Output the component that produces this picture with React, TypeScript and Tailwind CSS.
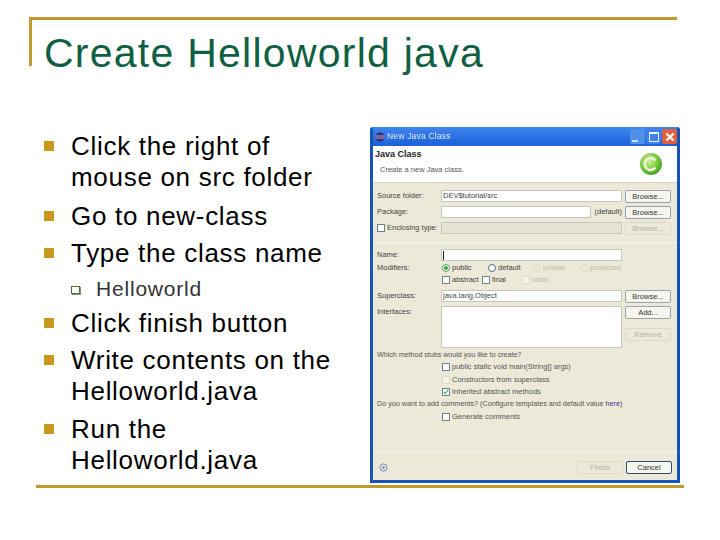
import React from "react";

const bullets: { text: string[]; sub?: boolean; mt: number }[] = [
  { text: ["Click the right of", "mouse on src folder"], mt: 0 },
  { text: ["Go to new-class"], mt: 8 },
  { text: ["Type the class name"], mt: 6 },
  { text: ["Helloworld"], sub: true, mt: 8 },
  { text: ["Click finish button"], mt: 7 },
  { text: ["Write contents on the", "Helloworld.java"], mt: 6 },
  { text: ["Run the", "Helloworld.java"], mt: 7 },
];

function Square() {
  return <span className="mt-[10px] mr-[17px] h-[10px] w-[10px] shrink-0 bg-[#c8991c]" />;
}

function Hollow() {
  return (
    <span className="mt-[9px] mr-[16px] ml-[27px] h-[8px] w-[9px] shrink-0 border border-[#4f6b3a] bg-white shadow-[1px_1px_0_#7d9468]" />
  );
}

function Btn({ label, disabled, strong }: { label: string; disabled?: boolean; strong?: boolean }) {
  return (
    <div
      className={`flex h-[13px] w-[46px] items-center justify-center rounded-[2px] border text-[7.5px] ${
        disabled
          ? "border-[#dcd9c8] text-[#b4b2a4]"
          : strong
            ? "border-[#2f4f6f] bg-[#f6f5ee] text-[#333]"
            : "border-[#9aa3ad] bg-[#f6f5ee] text-[#333]"
      }`}
    >
      {label}
    </div>
  );
}

function Field({ children, disabled, className = "" }: { children?: React.ReactNode; disabled?: boolean; className?: string }) {
  return (
    <div
      className={`flex items-center border border-[#c4c8bc] pl-[1px] text-[7.5px] text-[#444] ${
        disabled ? "bg-[#e6e3d3]" : "bg-white"
      } ${className}`}
    >
      {children}
    </div>
  );
}

function Row({ label, mt, children, right, h = 13 }: { label?: React.ReactNode; mt: string; children?: React.ReactNode; right?: React.ReactNode; h?: number }) {
  return (
    <div className={`flex ${mt}`} style={{ height: h }}>
      <div className="flex h-[12px] w-[64px] shrink-0 items-center whitespace-nowrap text-[7.5px] text-[#444]">{label}</div>
      <div className="flex w-[181px] shrink-0">{children}</div>
      <div className="ml-[3px] w-[46px] shrink-0">{right}</div>
    </div>
  );
}

function Check({ checked, faint }: { checked?: boolean; faint?: boolean }) {
  return (
    <span
      className={`mr-[2px] flex h-[8px] w-[8px] shrink-0 items-center justify-center border ${
        faint ? "border-[#dcdacb] bg-[#f4f2e8]" : "border-[#6a7f8f] bg-white"
      }`}
    >
      {checked && (
        <svg viewBox="0 0 8 8" className="h-[6px] w-[6px]">
          <path d="M1 4l2 2 4-5" stroke="#2f9a3c" strokeWidth="1.4" fill="none" />
        </svg>
      )}
    </span>
  );
}

function Radio({ on, faint }: { on?: boolean; faint?: boolean }) {
  return (
    <span
      className={`mr-[2px] flex h-[8px] w-[8px] shrink-0 items-center justify-center rounded-full border ${
        faint ? "border-[#dedccd]" : on ? "border-[#5a9a6a] bg-white" : "border-[#51657a] bg-white"
      }`}
    >
      {on && <span className="h-[4px] w-[4px] rounded-full bg-[#38a848]" />}
    </span>
  );
}

function CheckLine({ label, checked, mt, faint }: { label: string; checked?: boolean; mt: string; faint?: boolean }) {
  return (
    <div className={`ml-[65px] flex h-[12px] items-center whitespace-nowrap text-[7.5px] text-[#555] ${mt}`}>
      <Check checked={checked} faint={faint} />
      {label}
    </div>
  );
}

function Dialog() {
  return (
    <div
      className="flex h-[356px] w-[310px] shrink-0 flex-col overflow-hidden rounded-t-[3px] border-x-[3px] border-b-[3px] border-[#1655b8] text-[#444] blur-[0.45px]"
      style={{ fontFamily: '"Liberation Sans", Arial, sans-serif' }}
    >
      <div className="-mx-[3px] flex h-[19px] shrink-0 items-center bg-gradient-to-b from-[#3f86ee] to-[#1a5fd8] pl-[5px] pr-[3px]">
        <svg viewBox="0 0 10 10" className="mr-[2px] h-[10px] w-[10px]">
          <circle cx="5" cy="5" r="4.5" fill="#3b2a78" />
          <path d="M0.5 4h9M0.5 6h9" stroke="#e8e8f0" strokeWidth="0.7" />
        </svg>
        <span className="text-[8.5px] tracking-[0.2px] text-[#dfe8ff]">New Java Class</span>
        <div className="ml-auto flex gap-[1px]">
          <span className="relative h-[15px] w-[15px] rounded-[2px] bg-[#4f8fe8]">
            <span className="absolute bottom-[2px] left-[2px] h-[2px] w-[6px] bg-[#cfe0ff]" />
          </span>
          <span className="flex h-[15px] w-[15px] items-center justify-center rounded-[2px] bg-[#3f80e8]">
            <span className="h-[10px] w-[10px] border border-t-2 border-[#eaf2ff]" />
          </span>
          <span className="flex h-[15px] w-[15px] items-center justify-center rounded-[2px] bg-[#e2603c]">
            <svg viewBox="0 0 10 10" className="h-[12px] w-[12px]">
              <path d="M2 2l6 6M8 2l-6 6" stroke="#fff" strokeWidth="1.8" />
            </svg>
          </span>
        </div>
      </div>

      <div className="flex h-[37px] shrink-0 justify-between border-b border-[#d8d5c4] bg-white pl-[2px] pr-[14px]">
        <div>
          <div className="mt-[3px] text-[9px] font-bold leading-[11px] text-[#222]">Java Class</div>
          <div className="mt-[5px] ml-[5px] text-[7.5px] leading-[10px] text-[#555]">Create a new Java class.</div>
        </div>
        <svg viewBox="0 0 24 24" className="mt-[6px] h-[24px] w-[24px]">
          <defs>
            <radialGradient id="g" cx="40%" cy="35%" r="70%">
              <stop offset="0%" stopColor="#d6f2a0" />
              <stop offset="60%" stopColor="#74c83a" />
              <stop offset="100%" stopColor="#3f9a2a" />
            </radialGradient>
          </defs>
          <circle cx="12" cy="12" r="11" fill="url(#g)" />
          <path d="M16.5 8.5A6 6 0 1 0 16.5 15.5" stroke="#f4fbe0" strokeWidth="2.4" fill="none" />
        </svg>
      </div>

      <div className="flex flex-1 flex-col bg-[#ece9d8] pl-[4px]">
        <Row label="Source folder:" mt="mt-[7px]" right={<Btn label="Browse..." />}>
          <Field className="h-[12px] w-full">DEV$tutorial/src</Field>
        </Row>
        <Row label="Package:" mt="mt-[3px]" right={<Btn label="Browse..." />}>
          <Field className="h-[12px] w-[152px]" />
          <span className="ml-[3px] whitespace-nowrap text-[7.5px] leading-[12px]">(default)</span>
        </Row>
        <Row
          label={
            <>
              <Check />
              Enclosing type:
            </>
          }
          mt="mt-[3px]"
          right={<Btn label="Browse..." disabled />}
        >
          <Field disabled className="h-[12px] w-full" />
        </Row>

        <div className="mt-[7px] -ml-[4px] h-[1px] bg-[#f7f6ee]" />

        <Row label="Name:" mt="mt-[6px]" h={12}>
          <Field className="h-[12px] w-full">
            <span className="h-[9px] w-[1px] bg-[#222]" />
          </Field>
        </Row>
        <Row label="Modifiers:" mt="mt-[1px]" h={12}>
          <div className="ml-[1px] flex h-[12px] items-center whitespace-nowrap text-[7.5px]">
            <Radio on />
            <span className="w-[36px]">public</span>
            <Radio />
            <span className="w-[35px]">default</span>
            <Radio faint />
            <span className="w-[37px] text-[#c0beb0]">private</span>
            <Radio faint />
            <span className="text-[#c0beb0]">protected</span>
          </div>
        </Row>
        <Row mt="mt-0" h={12}>
          <div className="ml-[1px] flex h-[12px] items-center whitespace-nowrap text-[7.5px]">
            <Check />
            <span className="w-[30px]">abstract</span>
            <Check />
            <span className="w-[30px]">final</span>
            <Check faint />
            <span className="text-[#c0beb0]">static</span>
          </div>
        </Row>
        <Row label="Superclass:" mt="mt-[4px]" right={<Btn label="Browse..." />}>
          <Field className="h-[12px] w-full">java.lang.Object</Field>
        </Row>
        <Row
          label="Interfaces:"
          mt="mt-[3px]"
          h={42}
          right={
            <div className="flex flex-col gap-[9px]">
              <Btn label="Add..." />
              <Btn label="Remove" disabled />
            </div>
          }
        >
          <Field className="h-[42px] w-full" />
        </Row>

        <div className="mt-[1px] h-[12px] whitespace-nowrap text-[7.1px] leading-[12px] text-[#555]">Which method stubs would you like to create?</div>
        <CheckLine mt="mt-0" label="public static void main(String[] args)" />
        <CheckLine mt="mt-[0.5px]" label="Constructors from superclass" faint />
        <CheckLine mt="mt-[0.5px]" label="Inherited abstract methods" checked />
        <div className="h-[12px] whitespace-nowrap text-[7.2px] leading-[12px] text-[#555]">
          Do you want to add comments? (Configure templates and default value <span className="text-[#3a3a9a]">here</span>)
        </div>
        <CheckLine mt="mt-[1px]" label="Generate comments" />

        <div className="mt-[28px] -ml-[4px] h-[1px] bg-[#f7f6ee]" />
        <div className="mt-[9px] flex items-center pr-[5px]">
          <svg viewBox="0 0 10 10" className="ml-[2px] h-[9px] w-[9px]">
            <circle cx="5" cy="5" r="4" fill="#dfe6f0" stroke="#6d7f9c" strokeWidth="1" />
            <circle cx="5" cy="5" r="1.3" fill="#6d7f9c" />
          </svg>
          <div className="ml-auto flex gap-[3px]">
            <Btn label="Finish" disabled />
            <Btn label="Cancel" strong />
          </div>
        </div>
      </div>
    </div>
  );
}

export default function App() {
  return (
    <div className="h-[540px] w-[720px] overflow-hidden bg-white" style={{ fontFamily: '"Liberation Sans", Arial, sans-serif' }}>
      <div className="pt-[17px] pl-[29px]">
        <div className="h-[49px] w-[648px] border-t-[3px] border-l-[3px] border-[#bf9a2f] pl-[12px] pt-[10px] text-[41px] leading-[46px] tracking-[1.25px] whitespace-nowrap text-[#0f5f43]">
          Create Helloworld java
        </div>
      </div>
      <div className="flex pl-[44px]">
        <ul className="mt-[65px] w-[326px] shrink-0 text-black">
          {bullets.map((b) => (
            <li key={b.text[0]} className="flex" style={{ marginTop: b.mt }}>
              {b.sub ? <Hollow /> : <Square />}
              <div className={b.sub ? "text-[21px] leading-[24px] tracking-[0.8px] text-[#333]" : "text-[26px] leading-[31px] tracking-[0.7px]"}>
                {b.text.map((t) => (
                  <div key={t} className="whitespace-nowrap">
                    {t}
                  </div>
                ))}
              </div>
            </li>
          ))}
        </ul>
        <div className="mt-[61px]">
          <Dialog />
        </div>
      </div>
      <div className="mt-[2px] ml-[36px] h-[3px] w-[648px] bg-[#bf9a2f]" />
    </div>
  );
}
